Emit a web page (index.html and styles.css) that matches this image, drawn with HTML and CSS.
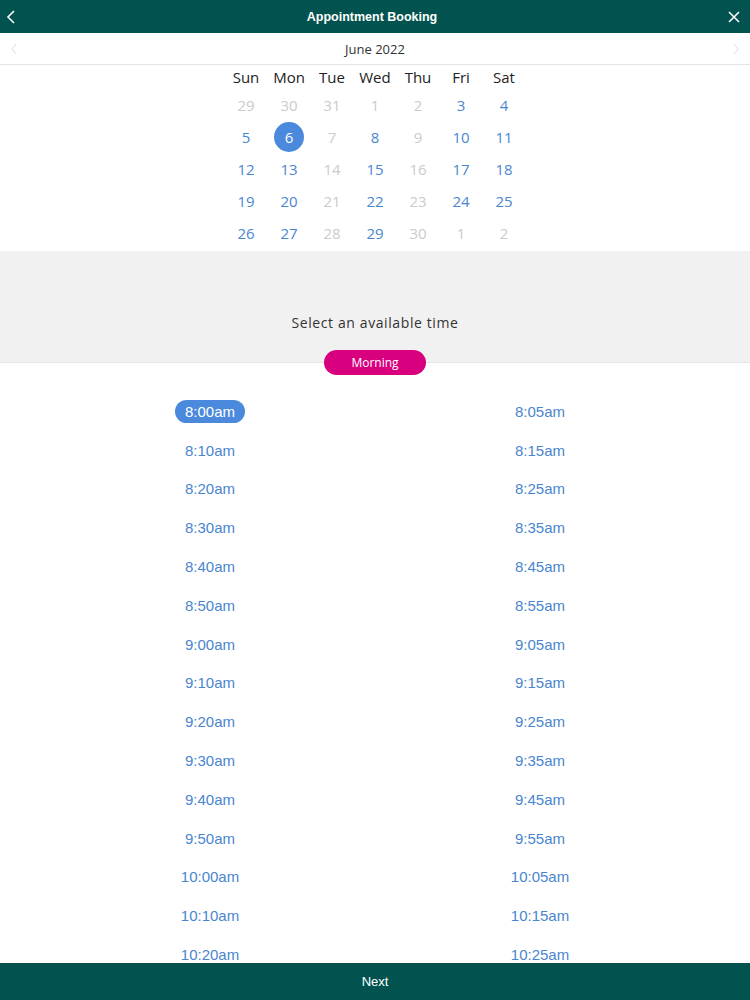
FILE: index.html
```html
<!DOCTYPE html>
<html>
<head>
<meta charset="utf-8">
<link rel="stylesheet" href="styles.css">
</head>
<body>
<div class="app">
  <header class="topbar">
    <svg class="icon-back" width="12" height="16" viewBox="0 0 12 16"><path d="M9 2 L3 8 L9 14" fill="none" stroke="#fff" stroke-width="1.6"/></svg>
    <div class="title">Appointment Booking</div>
    <svg class="icon-close" width="14" height="14" viewBox="0 0 14 14"><path d="M2 2 L12 12 M12 2 L2 12" fill="none" stroke="#fff" stroke-width="1.6"/></svg>
  </header>
  <div class="monthbar">
    <svg class="mchev" width="10" height="14" viewBox="0 0 10 14"><path d="M7 2 L3 7 L7 12" fill="none" stroke="#ddd" stroke-width="1"/></svg>
    <div class="month">June 2022</div>
    <svg class="mchev" width="10" height="14" viewBox="0 0 10 14"><path d="M3 2 L7 7 L3 12" fill="none" stroke="#ddd" stroke-width="1"/></svg>
  </div>
  <div class="calendar">
    <div class="dow">Sun</div><div class="dow">Mon</div><div class="dow">Tue</div><div class="dow">Wed</div><div class="dow">Thu</div><div class="dow">Fri</div><div class="dow">Sat</div>
    <div class="day off">29</div><div class="day off">30</div><div class="day off">31</div><div class="day off">1</div><div class="day off">2</div><div class="day">3</div><div class="day">4</div>
    <div class="day">5</div><div class="day"><span class="sel">6</span></div><div class="day off">7</div><div class="day">8</div><div class="day off">9</div><div class="day">10</div><div class="day">11</div>
    <div class="day">12</div><div class="day">13</div><div class="day off">14</div><div class="day">15</div><div class="day off">16</div><div class="day">17</div><div class="day">18</div>
    <div class="day">19</div><div class="day">20</div><div class="day off">21</div><div class="day">22</div><div class="day off">23</div><div class="day">24</div><div class="day">25</div>
    <div class="day">26</div><div class="day">27</div><div class="day off">28</div><div class="day">29</div><div class="day off">30</div><div class="day off">1</div><div class="day off">2</div>
  </div>
  <div class="prompt">Select an available time</div>
  <div class="pillwrap"><span class="pill">Morning</span></div>
  <div class="times">
    <div class="slot"><span class="chosen">8:00am</span></div><div class="slot">8:05am</div>
    <div class="slot">8:10am</div><div class="slot">8:15am</div>
    <div class="slot">8:20am</div><div class="slot">8:25am</div>
    <div class="slot">8:30am</div><div class="slot">8:35am</div>
    <div class="slot">8:40am</div><div class="slot">8:45am</div>
    <div class="slot">8:50am</div><div class="slot">8:55am</div>
    <div class="slot">9:00am</div><div class="slot">9:05am</div>
    <div class="slot">9:10am</div><div class="slot">9:15am</div>
    <div class="slot">9:20am</div><div class="slot">9:25am</div>
    <div class="slot">9:30am</div><div class="slot">9:35am</div>
    <div class="slot">9:40am</div><div class="slot">9:45am</div>
    <div class="slot">9:50am</div><div class="slot">9:55am</div>
    <div class="slot">10:00am</div><div class="slot">10:05am</div>
    <div class="slot">10:10am</div><div class="slot">10:15am</div>
    <div class="slot">10:20am</div><div class="slot">10:25am</div>
  </div>
  <footer class="next">Next</footer>
</div>
</body>
</html>
```

FILE: styles.css
```css
html, body { margin: 0; padding: 0; }
body { background: #fff; font-family: "Open Sans", sans-serif; }
.app { height: 1000px; display: flex; flex-direction: column; overflow: hidden; }
.topbar {
  height: 33px; flex: none; background: #02534f;
  display: flex; align-items: center; justify-content: space-between;
  padding: 0 9px 0 5px;
}
.title { font-family: "Liberation Sans", Arial, sans-serif; font-weight: bold; font-size: 12.5px; color: #fff; }
.monthbar {
  height: 32px; flex: none; border-bottom: 1px solid #e4e4e4; box-sizing: border-box;
  display: flex; align-items: center; justify-content: space-between;
  padding: 0 9px;
}
.month { font-size: 13px; color: #333; }
.calendar {
  flex: none; width: 301px; margin: 0 auto;
  display: grid; grid-template-columns: repeat(7, 43px);
  grid-auto-rows: 32px; grid-template-rows: 25px;
  padding-bottom: 1px;
}
.dow { font-size: 15px; color: #222; display: flex; align-items: center; justify-content: center; padding-bottom: 1px; }
.day { font-size: 15px; color: #4a86cf; display: flex; align-items: center; justify-content: center; padding-bottom: 2px; }
.day.off { color: #cbcbcb; }
.sel {
  width: 30px; height: 30px; border-radius: 50%; background: #4a89dc; color: #fff;
  display: flex; align-items: center; justify-content: center;
}
.prompt {
  flex: none; height: 112px; background: #f2f1f2; border-bottom: 1px solid #e6e6e6;
  box-sizing: border-box; padding-top: 62px;
  text-align: center; font-size: 14px; letter-spacing: 0.6px; color: #333;
}
.pillwrap { flex: none; display: flex; justify-content: center; margin-top: -13px; position: relative; }
.pill {
  width: 102px; height: 25px; border-radius: 13px; background: #d9007f; color: #fff;
  font-size: 12px; display: flex; align-items: center; justify-content: center;
}
.times {
  flex: 1; overflow: hidden; padding: 17px 45px 0;
  display: grid; grid-template-columns: 330px 330px; grid-auto-rows: 38.8px;
}
.slot {
  font-family: "Liberation Sans", Arial, sans-serif; font-size: 15px; color: #4a86cf;
  display: flex; align-items: center; justify-content: center;
}
.chosen { background: #4a89dc; color: #fff; border-radius: 12px; padding: 3px 10px; }
.next {
  flex: none; height: 37px; background: #02534f; color: #fff;
  font-family: "Liberation Sans", Arial, sans-serif; font-size: 13px;
  display: flex; align-items: center; justify-content: center;
}
```
